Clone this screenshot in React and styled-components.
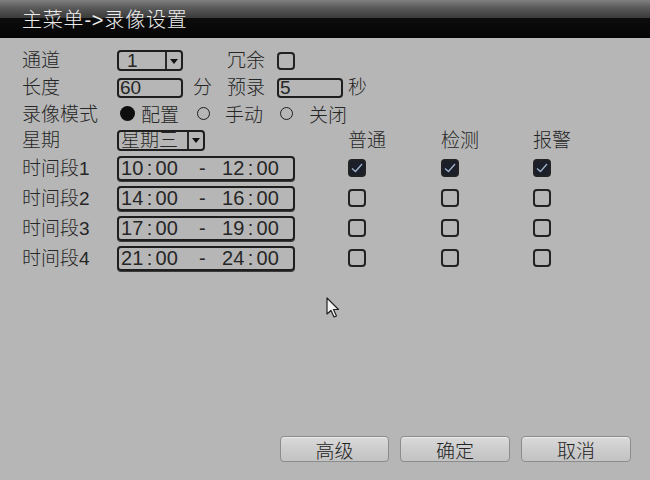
import React from "react";
import styled, { createGlobalStyle } from "styled-components";

const GlobalStyle = createGlobalStyle`
  html, body {
    margin: 0;
    padding: 0;
    background: #b6b6b6;
  }
  * {
    box-sizing: border-box;
  }
`;

const Screen = styled.div`
  position: relative;
  width: 650px;
  height: 480px;
  display: flex;
  flex-direction: column;
  background: #b6b6b6;
  color: #262626;
  font-family: "Liberation Sans", "Noto Sans CJK SC", sans-serif;
  font-size: 19px;
  font-weight: 300;
  overflow: hidden;
`;

const TitleBar = styled.div`
  height: 38px;
  display: flex;
  align-items: center;
  padding-left: 22px;
  padding-bottom: 2px;
  background: linear-gradient(to bottom, #808080 0%, #5a5a5a 20%, #3c3c3c 46%, #0c0c0c 48%, #050505 100%);
  color: #ececec;
  font-size: 20px;
  letter-spacing: 0.8px;
`;

const Content = styled.div`
  flex: 1;
  display: flex;
  flex-direction: column;
  padding: 9px 0 0 22px;
`;

const Row = styled.div`
  height: ${(p) => p.$h || 27}px;
  display: flex;
  align-items: center;
`;

const Label = styled.div`
  width: ${(p) => p.$w || 95}px;
  flex-shrink: 0;
  white-space: nowrap;
  line-height: 1;
`;

const Unit = styled.span`
  margin-left: ${(p) => p.$ml || 0}px;
  line-height: 1;
`;

const Field = styled.div`
  width: ${(p) => p.$w}px;
  flex-shrink: 0;
  display: flex;
  align-items: center;
`;

const Select = styled.div`
  width: ${(p) => p.$w}px;
  height: 21px;
  border: 2px solid #1e1e1e;
  border-radius: 4px;
  display: flex;
  align-items: center;
  overflow: hidden;
`;

const SelectText = styled.div`
  flex: 1;
  padding-left: ${(p) => p.$pl || 4}px;
  line-height: 1;
  white-space: nowrap;
`;

const SelectArrow = styled.div`
  width: 16px;
  height: 100%;
  border-left: 2px solid #2a2a2a;
  display: flex;
  align-items: center;
  justify-content: center;

  &::after {
    content: "";
    width: 0;
    height: 0;
    border-left: 4px solid transparent;
    border-right: 4px solid transparent;
    border-top: 5px solid #111;
    margin-top: 1px;
  }
`;

const TextInput = styled.div`
  width: 66px;
  height: 20px;
  border: 2px solid #1e1e1e;
  border-radius: 4px;
  padding-left: 1px;
  display: flex;
  align-items: center;
  line-height: 1;
`;

const CheckBox = styled.div`
  width: 18px;
  height: 18px;
  flex-shrink: 0;
  border: 2px solid #222;
  border-radius: 4px;
  background: ${(p) => (p.$on ? "#1b1f2a" : "transparent")};
  display: flex;
  align-items: center;
  justify-content: center;
`;

const Options = styled.div`
  display: flex;
  align-items: center;
  margin-left: 3px;
  margin-top: -2px;
`;

const Option = styled.div`
  width: ${(p) => p.$w}px;
  display: flex;
  align-items: center;
`;

const Dot = styled.div`
  width: ${(p) => (p.$on ? 15 : 13)}px;
  height: ${(p) => (p.$on ? 15 : 13)}px;
  border-radius: 50%;
  flex-shrink: 0;
  background: ${(p) => (p.$on ? "#0e0e0e" : "transparent")};
  border: ${(p) => (p.$on ? "none" : "1.6px solid #1e1e1e")};
  margin-right: ${(p) => p.$gap}px;
`;

const Spacer = styled.div`
  width: ${(p) => p.$w}px;
  flex-shrink: 0;
`;

const Col = styled.div`
  width: ${(p) => p.$w}px;
  flex-shrink: 0;
  display: flex;
  align-items: center;
  line-height: 1;
`;

const TimeBox = styled.div`
  width: 178px;
  height: 25px;
  border: 2px solid #1e1e1e;
  border-radius: 4px;
  box-shadow: 0 1px 0 #3a3a3a;
  display: flex;
  align-items: center;
  padding-left: 2px;
  line-height: 1;
  font-size: 20px;
`;

const Clock = styled.span`
  display: inline-flex;
  width: ${(p) => p.$w}px;
  letter-spacing: 0.2px;
`;

const Colon = styled.span`
  margin: 0 3px;
`;

const Footer = styled.div`
  display: flex;
  justify-content: flex-end;
  gap: 11px;
  padding: 0 19px 18px 0;
`;

const Button = styled.div`
  width: ${(p) => p.$w || 110}px;
  height: 26px;
  border: 1px solid #8c8c8c;
  border-radius: 4px;
  background: linear-gradient(to bottom, #dadada 0%, #cdcdcd 50%, #c3c3c3 100%);
  box-shadow: inset 0 1px 0 #ececec;
  display: flex;
  align-items: center;
  justify-content: center;
  font-size: 19px;
  color: #222;
`;

const Cursor = styled.svg`
  position: absolute;
  left: 326px;
  top: 297px;
`;

const Check = () => (
  <svg width="12" height="10" viewBox="0 0 12 10">
    <path d="M1 5.5 L4.5 8.5 L11 1" fill="none" stroke="#9fb0c8" strokeWidth="1.4" />
  </svg>
);

const Time = ({ from, to }) => {
  const [fh, fm] = from.split(":");
  const [th, tm] = to.split(":");
  return (
    <TimeBox>
      <Clock $w={78}>
        {fh}
        <Colon>:</Colon>
        {fm}
      </Clock>
      <Clock $w={23}>-</Clock>
      <Clock>
        {th}
        <Colon>:</Colon>
        {tm}
      </Clock>
    </TimeBox>
  );
};

const periods = [
  { name: "时间段1", from: "10:00", to: "12:00", checks: [true, true, true] },
  { name: "时间段2", from: "14:00", to: "16:00", checks: [false, false, false] },
  { name: "时间段3", from: "17:00", to: "19:00", checks: [false, false, false] },
  { name: "时间段4", from: "21:00", to: "24:00", checks: [false, false, false] },
];

const colWidths = [93, 92, 60];

const App = () => {
  return (
    <>
      <GlobalStyle />
      <Screen>
        <TitleBar>主菜单-&gt;录像设置</TitleBar>
        <Content>
          <Row $h={27}>
            <Label>通道</Label>
            <Field $w={110}>
              <Select $w={66}>
                <SelectText $pl={8}>1</SelectText>
                <SelectArrow />
              </Select>
            </Field>
            <Label $w={50}>冗余</Label>
            <CheckBox />
          </Row>
          <Row $h={27}>
            <Label>长度</Label>
            <Field $w={110}>
              <TextInput>60</TextInput>
              <Unit $ml={10}>分</Unit>
            </Field>
            <Label $w={50}>预录</Label>
            <TextInput>5</TextInput>
            <Unit $ml={5}>秒</Unit>
          </Row>
          <Row $h={26}>
            <Label>录像模式</Label>
            <Options>
              <Option $w={77}>
                <Dot $on $gap={6} />
                配置
              </Option>
              <Option $w={83}>
                <Dot $gap={15} />
                手动
              </Option>
              <Option $w={80}>
                <Dot $gap={16} />
                关闭
              </Option>
            </Options>
          </Row>
          <Row $h={26}>
            <Label>星期</Label>
            <Select $w={88}>
              <SelectText $pl={2}>星期三</SelectText>
              <SelectArrow />
            </Select>
            <Spacer $w={143} />
            <Col $w={colWidths[0]}>普通</Col>
            <Col $w={colWidths[1]}>检测</Col>
            <Col $w={colWidths[2]}>报警</Col>
          </Row>
          {periods.map((p) => (
            <Row key={p.name} $h={30}>
              <Label>{p.name}</Label>
              <Time from={p.from} to={p.to} />
              <Spacer $w={53} />
              {p.checks.map((on, i) => (
                <Col key={i} $w={colWidths[i]}>
                  <CheckBox $on={on}>{on && <Check />}</CheckBox>
                </Col>
              ))}
            </Row>
          ))}
        </Content>
        <Footer>
          <Button $w={109}>高级</Button>
          <Button>确定</Button>
          <Button>取消</Button>
        </Footer>
        <Cursor width="14" height="22" viewBox="0 0 14 22">
          <path
            d="M1 1 L1 17 L5 13.5 L8 20 L10.5 19 L7.5 12.5 L12.5 12.5 Z"
            fill="#f2f2f2"
            stroke="#222"
            strokeWidth="1.2"
            strokeLinejoin="round"
          />
        </Cursor>
      </Screen>
    </>
  );
};

export default App;
